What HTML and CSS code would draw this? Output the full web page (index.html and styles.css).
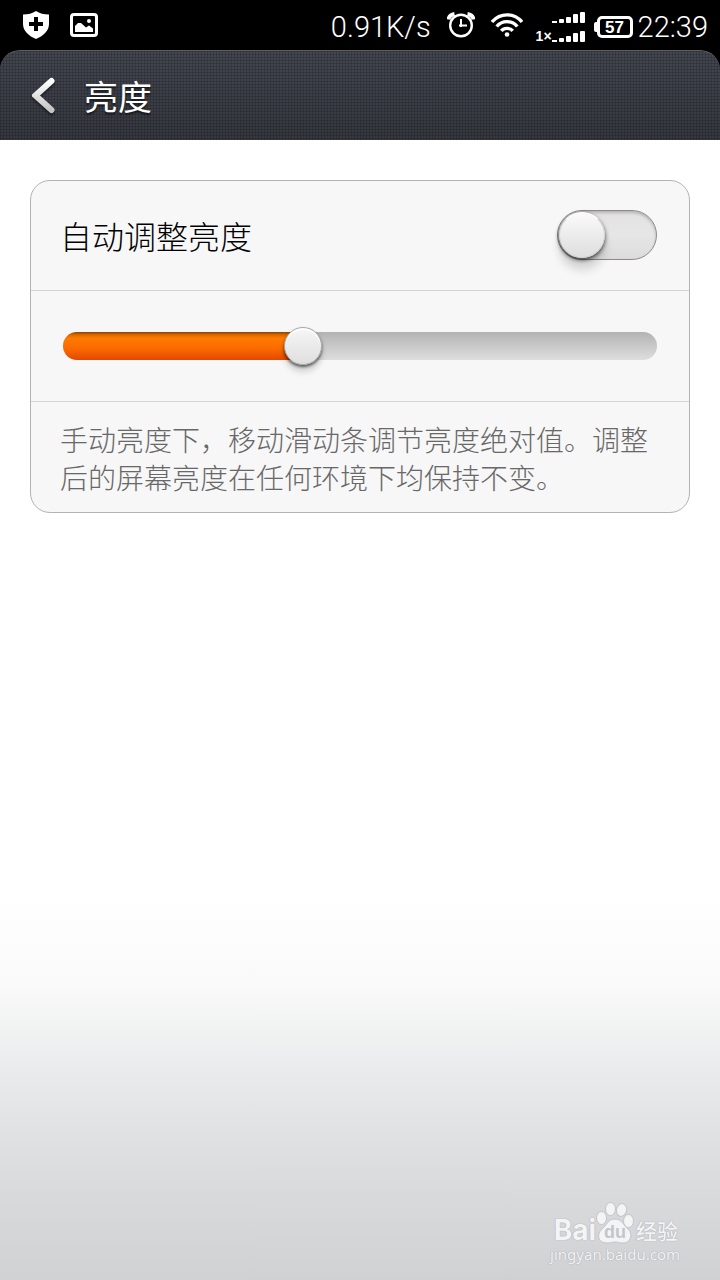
FILE: index.html
```html
<!DOCTYPE html>
<html lang="zh-CN">
<head>
    <meta charset="UTF-8">
    <meta name="viewport" content="width=device-width, initial-scale=1.0">
    <title>亮度</title>
    <link rel="stylesheet" href="styles.css">
</head>
<body>

<div class="status-bar">
    <div class="status-left">
        <svg width="26" height="28" viewBox="0 0 26 28">
            <path fill="#fff" d="M13 0C16.500 2.500 21 3.500 26 3.500V13C26 20 20 25 13 28C6 25 0 20 0 13V3.500C5 3.500 9.500 2.500 13 0Z"/>
            <path fill="#000" d="M11 6h4v5h5v4h-5v5h-4v-5H6v-4h5z"/>
        </svg>
        <svg width="28" height="24" viewBox="0 0 28 24">
            <rect x="1.500" y="1.500" width="25" height="21" rx="2.500" fill="none" stroke="#fff" stroke-width="3"/>
            <circle cx="19" cy="8" r="2" fill="#fff"/>
            <path fill="#fff" d="M5 19V13L8 10H11L16 14.500L19 12.500L23 15.500V19Z"/>
        </svg>
    </div>
    <div class="status-right">
        <span class="net-speed">0.91K/s</span>
        <svg class="alarm" width="28" height="26" viewBox="0 0 28 26" fill="none" stroke="#fff">
            <circle cx="14" cy="13.500" r="10.800" stroke-width="2.400"/>
            <path stroke-width="2" d="M14 7V15M12 13.500H20"/>
            <path stroke-width="4" d="M1.500 7.500C2 4.500 4 2.500 7.500 2M26.500 7.500C26 4.500 24 2.500 20.500 2"/>
        </svg>
        <svg class="wifi" width="32" height="24" viewBox="0 0 32 24" fill="none" stroke="#fff" stroke-width="3.400">
            <path d="M1 9C9 -.5 23 -.5 31 9M5.700 13.500C11 7 21 7 26.300 13.500M10.300 17.800C13 14.500 19 14.500 21.700 17.800"/>
            <circle cx="16" cy="21.500" r="2.300" fill="#fff" stroke="none"/>
        </svg>
        <div class="signals">
            <span class="net-type">1×</span>
            <svg width="34" height="32" viewBox="0 0 34 32" fill="#fff">
                <path d="M0 9h5v2H0zM0 28h5v2H0z"/>
                <rect x="7" y="7" width="5" height="4" rx="1"/>
                <rect x="14" y="5" width="5" height="6" rx="1"/>
                <rect x="21" y="2" width="5" height="9" rx="1"/>
                <rect x="28" y="0" width="5" height="11" rx="1"/>
                <rect x="7" y="26" width="5" height="4" rx="1"/>
                <rect x="14" y="24" width="5" height="6" rx="1"/>
                <rect x="21" y="21" width="5" height="9" rx="1"/>
                <rect x="28" y="19" width="5" height="11" rx="1"/>
            </svg>
        </div>
        <div class="battery">57</div>
        <span class="clock">22:39</span>
    </div>
</div>

<header class="title-bar">
    <button class="back" type="button" aria-label="返回">
        <svg width="24" height="38" viewBox="0 0 24 38">
            <defs>
                <linearGradient id="arrow" x1="0" y1="0" x2="0" y2="1">
                    <stop offset="0" stop-color="#fff"/>
                    <stop offset="1" stop-color="#c4c4c6"/>
                </linearGradient>
            </defs>
            <path d="M19.500 4L3.500 18.500L19.500 33" fill="none" stroke="url(#arrow)" stroke-width="6" stroke-linecap="round"/>
        </svg>
    </button>
    <h1>亮度</h1>
</header>

<main>
    <section class="card">
        <div class="row">
            <label for="auto">自动调整亮度</label>
            <input class="toggle" id="auto" type="checkbox">
        </div>
        <div class="row">
            <input class="slider" type="range" min="0" max="1000" value="397" aria-label="亮度" style="--fill: 40%">
        </div>
        <p class="hint">手动亮度下，移动滑动条调节亮度绝对值。调整后的屏幕亮度在任何环境下均保持不变。</p>
    </section>

    <footer class="watermark">
        <div class="brand">
            <span class="bai">Bai</span>
            <div class="paw">
                <svg width="38" height="42" viewBox="0 0 38 42" fill="#f3f4f5" stroke="#c3c5c8" stroke-width="1">
                    <ellipse cx="5.500" cy="16" rx="5" ry="6.500"/>
                    <ellipse cx="14.500" cy="7" rx="5" ry="6.500"/>
                    <ellipse cx="25.500" cy="8" rx="5" ry="6.500" transform="rotate(12 25.500 8)"/>
                    <ellipse cx="32.500" cy="19" rx="5" ry="6.500"/>
                    <path d="M19 17C26 17 27 23 32 27C38 33 34 41 27 41C23 41 22 40 19 40C16 40 15 41 11 41C2 41 0 33 6 27C11 23 12 17 19 17Z"/>
                </svg>
                <span class="du">du</span>
            </div>
            <span class="jingyan">经验</span>
        </div>
        <div class="site">jingyan.baidu.com</div>
    </footer>
</main>

</body>
</html>
```
FILE: styles.css
```css
*, *::before {
    box-sizing: border-box;
}
body {
    margin: 0;
    min-height: 100vh;
    display: flex;
    flex-direction: column;
    background: #000;
    font-family: "Noto Sans CJK SC", sans-serif;
}

/* status bar */
.status-bar {
    display: flex;
    justify-content: space-between;
    align-items: center;
    height: 50px;
    padding: 0 12px 0 23px;
    color: #fff;
}
.status-left {
    display: flex;
    align-items: center;
    gap: 21px;
}
.status-right {
    display: flex;
    align-items: center;
}
.net-speed, .clock {
    font: 300 29px/36px Roboto, "Liberation Sans", sans-serif;
    margin-top: 4px;
}
.alarm { margin: 0 16px; }
.wifi { margin-right: 13px; }
.signals {
    display: flex;
    align-items: flex-end;
    margin: 6px 7px 0 0;
}
.net-type {
    font: bold 14px/16px "Liberation Sans", sans-serif;
}
.battery {
    position: relative;
    width: 36px;
    height: 22px;
    margin: 4px 5px 0 4px;
    border: 3px solid #fff;
    border-radius: 5px;
    font: bold 17px/17px "Liberation Sans", sans-serif;
    text-align: center;
}
.battery::before {
    content: "";
    position: absolute;
    left: -6px;
    top: 3px;
    width: 4px;
    height: 10px;
    border-radius: 2px 0 0 2px;
    background: #fff;
}

/* title bar */
.title-bar {
    display: flex;
    align-items: center;
    gap: 20px;
    height: 90px;
    padding: 0 24px;
    border-top: 1px solid #5c5e64;
    border-radius: 20px 20px 0 0;
    background:
        repeating-linear-gradient(to right, rgba(0, 0, 0, 0.16) 0 1px, transparent 1px 3px),
        repeating-linear-gradient(to bottom, rgba(0, 0, 0, 0.16) 0 1px, transparent 1px 3px),
        linear-gradient(#42464f, #35373e);
}
.back {
    display: flex;
    padding: 0 8px;
    border: 0;
    background: none;
    filter: drop-shadow(0 2px 1px rgba(0, 0, 0, 0.5));
}
.title-bar h1 {
    margin: 0;
    color: #fff;
    font-size: 34px;
    line-height: 48px;
    font-weight: 400;
    text-shadow: 0 2px 2px rgba(0, 0, 0, 0.6);
}

/* content */
main {
    flex: 1;
    display: flex;
    flex-direction: column;
    justify-content: space-between;
    padding: 40px 30px 16px;
    background: linear-gradient(#fff 66%, #fafafa 74%, #f1f2f2 78%, #e9eaeb 82%, #dfe0e2 88%, #d8d9db 93%, #d0d1d3);
}
.card {
    border: 1px solid #b3b3b3;
    border-radius: 20px;
    background: #f7f7f7;
}
.row {
    display: flex;
    align-items: center;
    justify-content: space-between;
    height: 110px;
    padding: 0 32px 2px 29px;
    border-bottom: 1px solid #d4d4d4;
}
.row + .row {
    height: 111px;
    padding: 0 32px;
}
.row label {
    font-size: 32px;
    font-weight: 300;
    color: #000;
}
.toggle {
    appearance: none;
    width: 100px;
    height: 50px;
    margin: 0;
    padding: 1px;
    border: 1px solid #8f8a87;
    border-radius: 25px;
    background: linear-gradient(#e2e2e2, #e6e6e6 50%, #dcdcdc);
    box-shadow: inset 0 2px 3px rgba(0, 0, 0, 0.2);
}
.toggle::before {
    content: "";
    display: block;
    width: 46px;
    height: 46px;
    border: 1px solid #d2d2d2;
    border-top-color: #fff;
    border-radius: 50%;
    background: linear-gradient(#fafafa, #dedede);
    box-shadow: 0 2px 4px rgba(0, 0, 0, 0.7), 0 12px 10px rgba(0, 0, 0, 0.14);
}
.toggle:checked::before { margin-left: auto; }
.slider {
    appearance: none;
    width: 100%;
    height: 38px;
    margin: 0;
    background: none;
}
.slider::-webkit-slider-runnable-track {
    height: 28px;
    border-radius: 14px;
    background:
        linear-gradient(#8a4200, #d86800 10%, #ff7a00 22%, #fa6a00 60%, #e34800) 0 0 / var(--fill) 100% no-repeat,
        linear-gradient(#b3b3b3, #dedede);
}
.slider::-webkit-slider-thumb {
    appearance: none;
    box-sizing: border-box;
    width: 38px;
    height: 38px;
    margin-top: -5px;
    border: 1px solid #a9a9a9;
    border-radius: 50%;
    background: linear-gradient(#f6f6f6, #dfdfdf);
    box-shadow: inset 0 2px 1px #fff, 0 2px 3px rgba(0, 0, 0, 0.6), 0 7px 6px rgba(0, 0, 0, 0.15);
}
.hint {
    margin: 0;
    padding: 18px 29px 16px;
    font-size: 28px;
    line-height: 38px;
    font-weight: 300;
    color: #686868;
}

/* watermark */
.watermark {
    align-self: flex-end;
    margin-right: 10px;
    color: #f3f4f5;
    text-shadow: 0 0 1px #a8aaad, 0 0 1px #a8aaad;
}
.brand {
    display: flex;
    align-items: flex-end;
    justify-content: flex-end;
}
.bai {
    font: bold 28px/28px Inter, sans-serif;
}
.paw {
    position: relative;
    display: flex;
}
.du {
    position: absolute;
    left: 0;
    right: 0;
    bottom: 2px;
    color: #c3c5c8;
    font: bold 18px/20px "Liberation Sans", sans-serif;
    text-align: center;
    text-shadow: none;
}
.jingyan {
    margin: 0 2px 0 2px;
    font-size: 21px;
    line-height: 28px;
    font-weight: 500;
}
.site {
    font: 15px/20px "Noto Sans", sans-serif;
}
```
